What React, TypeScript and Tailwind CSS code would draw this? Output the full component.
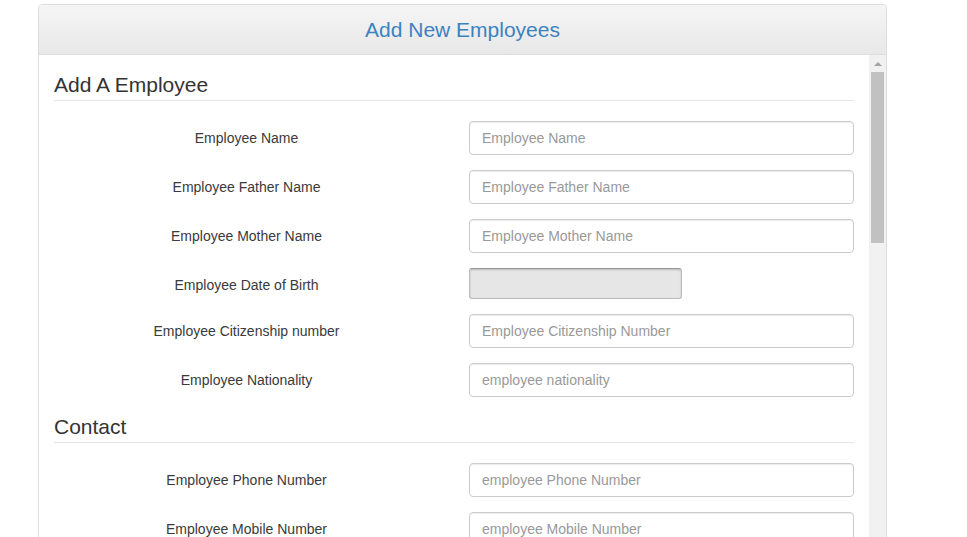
const font = { fontFamily: '"Liberation Sans", Arial, Helvetica, sans-serif' }

type Field = { label: string; placeholder?: string; date?: boolean }

const personal: Field[] = [
  { label: 'Employee Name', placeholder: 'Employee Name' },
  { label: 'Employee Father Name', placeholder: 'Employee Father Name' },
  { label: 'Employee Mother Name', placeholder: 'Employee Mother Name' },
  { label: 'Employee Date of Birth', date: true },
  { label: 'Employee Citizenship number', placeholder: 'Employee Citizenship Number' },
  { label: 'Employee Nationality', placeholder: 'employee nationality' },
]

const contact: Field[] = [
  { label: 'Employee Phone Number', placeholder: 'employee Phone Number' },
  { label: 'Employee Mobile Number', placeholder: 'employee Mobile Number' },
  { label: 'Employee Email', placeholder: 'employee Email' },
]

function Row({ field }: { field: Field }) {
  return (
    <div className="mb-[15px] flex">
      <label className="w-1/2 px-[15px] pt-[7px] text-center text-[14px] leading-[20px] text-[#3a3a3a]">
        {field.label}
      </label>
      <div className="w-1/2 px-[15px]">
        {field.date ? (
          <input
            type="text"
            disabled
            className="h-[31px] w-[213px] rounded-[3px] border border-[#bbb] border-t-[#999] bg-[#e6e6e6] shadow-[inset_0_1px_2px_rgba(0,0,0,0.2)]"
          />
        ) : (
          <input
            type="text"
            placeholder={field.placeholder}
            className="h-[34px] w-full rounded-[4px] border border-[#ccc] bg-white px-3 text-[14px] text-[#555] placeholder:text-[#999] shadow-[inset_0_1px_1px_rgba(0,0,0,0.075)] outline-none"
            style={font}
          />
        )}
      </div>
    </div>
  )
}

function Legend({ children }: { children: string }) {
  return (
    <div className="mb-5 border-b border-[#e5e5e5] text-[21px] leading-[30px] text-[#333]">{children}</div>
  )
}

export default function App() {
  return (
    <div className="h-[537px] overflow-hidden bg-white" style={font}>
      <div className="ml-[38px] mt-[4px] w-[849px] rounded-[4px] border border-[#ddd]">
        <div className="flex h-[50px] items-center justify-center rounded-t-[4px] border-b border-[#ddd] bg-gradient-to-b from-[#f5f5f5] to-[#e8e8e8]">
          <h3 className="text-[21px] leading-[22px] text-[#3b83c0]">Add New Employees</h3>
        </div>
        <div className="flex h-[600px]">
          <div className="flex-1 px-[15px] pt-[15px]">
            <Legend>Add A Employee</Legend>
            <div className="-mx-[15px]">
              {personal.map((f) => (
                <Row key={f.label} field={f} />
              ))}
            </div>
            <Legend>Contact</Legend>
            <div className="-mx-[15px]">
              {contact.map((f) => (
                <Row key={f.label} field={f} />
              ))}
            </div>
          </div>
          <div className="flex w-[17px] flex-col items-center bg-[#f1f1f1]">
            <div className="flex h-[17px] w-full items-center justify-center">
              <div className="h-0 w-0 border-x-[4px] border-b-[4px] border-x-transparent border-b-[#a3a3a3]" />
            </div>
            <div className="h-[171px] w-[13px] bg-[#c1c1c1]" />
          </div>
        </div>
      </div>
    </div>
  )
}
